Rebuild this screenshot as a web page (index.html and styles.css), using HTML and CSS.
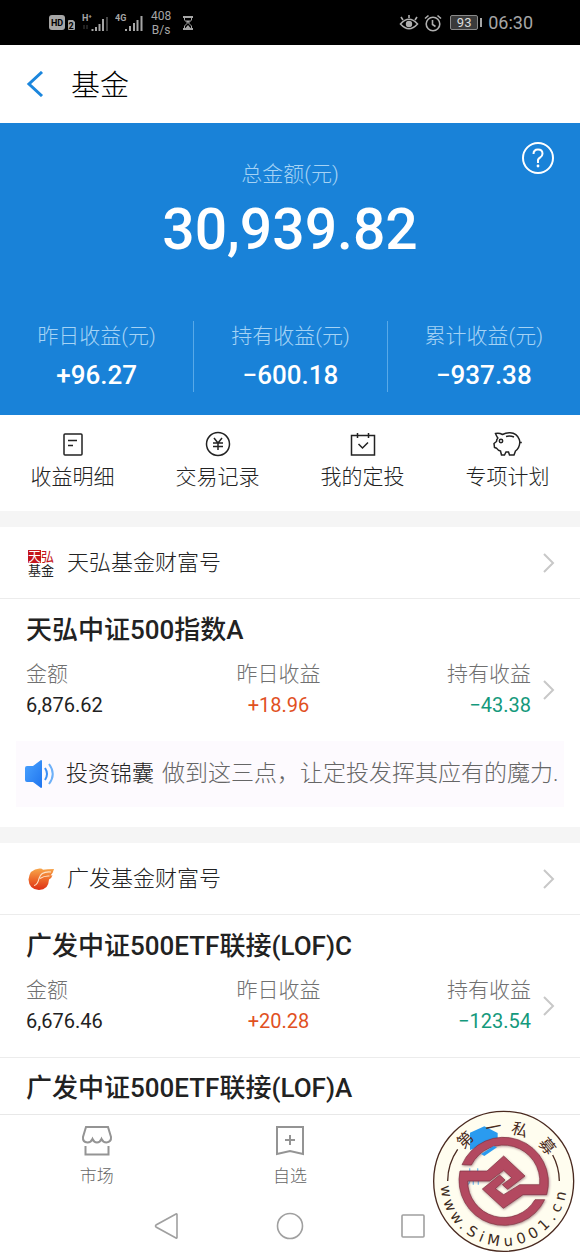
FILE: index.html
```html
<!DOCTYPE html>
<html lang="zh-CN">
<head>
<meta charset="utf-8">
<meta name="viewport" content="width=device-width, initial-scale=1">
<title>基金</title>
<link rel="stylesheet" href="styles.css">
</head>
<body>
<div class="app">
  <div class="status">
    <div class="status-side">
      <svg class="ic-hd" viewBox="0 0 27 18" width="27" height="18"><rect x="0" y="1" width="16" height="15" rx="3" fill="#a6a6a6"/><text x="8" y="12" text-anchor="middle" class="t-hd">HD</text><path d="M20 6h4l2 2v7q0 1-1 1h-5q-1 0-1-1V7q0-1 1-1z" fill="#a6a6a6"/><text x="22" y="15" text-anchor="middle" class="t-hd">2</text></svg>
      <svg viewBox="0 0 27 20" width="27" height="20"><text x="0" y="8" class="t-net">H⁺</text><path d="M2 12v4M5 12v4" stroke="#444" stroke-width="1"/><path d="M10.500 18v-2M14 18v-4M17.500 18v-7M21 18V6" stroke="#a6a6a6" stroke-width="2"/><path d="M25 18V4" stroke="#444" stroke-width="2"/></svg>
      <svg viewBox="0 0 28 20" width="28" height="20"><text x="0" y="8" class="t-net">4G</text><path d="M11 18v-2M15 18v-5M19 18v-8M22.500 18V7M26.500 18V3" stroke="#a6a6a6" stroke-width="2"/></svg>
      <div class="speed"><span>408</span><span>B/s</span></div>
      <svg class="ic-glass" viewBox="0 0 10 14" width="10" height="14" fill="none" stroke="#a6a6a6"><path d="M0 1h10M0 13h10" stroke-width="2"/><path d="M1.500 2v2L4.500 7l-3 3v2M8.500 2v2L5.500 7l3 3v2"/><path d="M2.500 4.500h5L5 7zM2.500 12L5 9l2.500 3z" fill="#a6a6a6" stroke="none"/></svg>
    </div>
    <div class="status-side status-right">
      <svg viewBox="0 0 20 18" width="20" height="18" fill="none" stroke="#b0b0b0" stroke-width="1.600"><path d="M1.500 10Q10 0.500 18.500 10Q10 19.500 1.500 10z"/><path d="M10 4V1M4 6L2 3M16 6l2-3"/><circle cx="10" cy="10" r="3.200" fill="#b0b0b0" stroke="none"/></svg>
      <svg viewBox="0 0 18 18" width="18" height="18" fill="none" stroke="#b0b0b0" stroke-width="1.600"><circle cx="9" cy="10" r="6.800"/><path d="M8.500 6v4.500l3 2M1 4.500L4.500 1.500M17 4.500L13.500 1.500"/></svg>
      <div class="battery"><span>93</span></div>
      <span class="clock">06:30</span>
    </div>
  </div>

  <header class="bar">
    <button class="back" aria-label="返回"><svg viewBox="0 0 18 26" width="18" height="26"><path d="M16 1L3 13l13 12" fill="none" stroke="#1b86dd" stroke-width="3"/></svg></button>
    <h1>基金</h1>
  </header>

  <section class="hero">
    <button class="help" aria-label="帮助"><svg viewBox="0 0 34 34" width="34" height="34" fill="none" stroke="#fff" stroke-width="2"><circle cx="17" cy="17" r="15"/><path d="M12.500 13Q12.500 8.500 17 8.500t4.500 4.200Q21.500 15 19 16.700T17 20V22"/><circle cx="17" cy="25" r="1.400" fill="#fff" stroke="none"/></svg></button>
    <div class="hero-label">总金额(元)</div>
    <div class="total">30,939.82</div>
    <div class="gains">
      <div class="gain"><span class="hero-label">昨日收益(元)</span><b>+96.27</b></div>
      <div class="gain"><span class="hero-label">持有收益(元)</span><b>−600.18</b></div>
      <div class="gain"><span class="hero-label">累计收益(元)</span><b>−937.38</b></div>
    </div>
  </section>

  <nav class="actions">
    <a href="#"><svg viewBox="0 0 28 26" width="28" height="26"><rect x="5" y="3" width="18" height="21" rx="1"/><path d="M9 9.500h9M9 14.500h5"/></svg>收益明细</a>
    <a href="#"><svg viewBox="0 0 28 26" width="28" height="26"><circle cx="14" cy="13" r="11.500"/><path d="M10 7l4 5 4-5M14 12v7M9 12h10M9 15.500h10"/></svg>交易记录</a>
    <a href="#"><svg viewBox="0 0 28 26" width="28" height="26"><rect x="2.500" y="4.500" width="23" height="19.500"/><path d="M8.500 2v5M19.500 2v5M9.500 13l4 4 5.500-5.500"/></svg>我的定投</a>
    <a href="#"><svg viewBox="0 0 30 26" width="30" height="26"><path d="M2.500 2.500Q6 1.500 9.500 3.500Q13 1.500 17 1.700Q24 2 26.300 8.500Q26.800 10 26.800 11.500Q26.500 17 22.500 20L21 24H16.500L15.500 21H13L11.500 24H8.500L7.500 20Q5 19.500 3.500 17.200L1.500 16.500L1 12.500L3.500 10.500Q3.500 8.500 4.800 7Q3.500 5 2.500 2.500zM26.800 11.500h2"/><circle cx="8" cy="10" r="1.700"/><path d="M13 5.500q4-1 8 .5"/></svg>专项计划</a>
  </nav>

  <section class="card">
    <a class="brand" href="#">
      <svg class="logo" viewBox="0 0 28 28" width="28" height="28"><rect x="1" y="1" width="13" height="13" fill="#c4151c"/><text class="t-logo" x="1" y="12"><tspan fill="#fff">天</tspan><tspan fill="#c4151c">弘</tspan></text><text class="t-logo" x="1" y="26">基金</text></svg>
      <span>天弘基金财富号</span>
      <svg class="chev" viewBox="0 0 12 20" width="12" height="20"><path d="M1 1l9 9-9 9"/></svg>
    </a>
    <article class="fund">
      <h2>天弘中证500指数A</h2>
      <div class="stats">
        <div><span>金额</span><b>6,876.62</b></div>
        <div><span>昨日收益</span><b class="up">+18.96</b></div>
        <div><span>持有收益</span><b class="down">−43.38</b></div>
        <svg class="chev" viewBox="0 0 12 20" width="12" height="20"><path d="M1 1l9 9-9 9"/></svg>
      </div>
    </article>
    <a class="tip" href="#">
      <svg viewBox="0 0 30 30" width="30" height="30"><defs><linearGradient id="spk" x2="1" y2="1"><stop stop-color="#4aa3ff"/><stop offset="1" stop-color="#1f74ee"/></linearGradient></defs><path d="M2 7h6l8-6q1 0 1 1v26q0 1-1 1l-8-6H2q-2 0-2-2V9q0-2 2-2z" fill="url(#spk)"/><path d="M20 9q4 6 0 12" fill="none" stroke="#3b8ff5" stroke-width="2"/><path d="M24 5q7.500 10 0 20" fill="none" stroke="#6db0f8" stroke-width="2"/></svg>
      <strong>投资锦囊</strong><span>做到这三点，让定投发挥其应有的魔力.</span>
    </a>
  </section>

  <section class="card">
    <a class="brand" href="#">
      <svg viewBox="0 0 28 28" width="28" height="28"><defs><linearGradient id="gf" x2="0" y2="1"><stop stop-color="#f7a64a"/><stop offset=".5" stop-color="#ee6a2a"/><stop offset="1" stop-color="#dd2f16"/></linearGradient></defs><path d="M27 4Q26 8.500 23.500 10.500l2-.3Q24.500 13.500 22 14.500Q21.500 25 12 25Q2 24.500 1.500 14.500Q2.500 4 12.500 3.500Q15 3.300 16 4.800Q20 4 27 4z" fill="url(#gf)"/><path d="M24 7Q14 6 12 13.500Q10.500 20 7 20.500M22.500 11q-5-.5-9.500 2.500" fill="none" stroke="#fde3c8" stroke-width="1.100"/></svg>
      <span>广发基金财富号</span>
      <svg class="chev" viewBox="0 0 12 20" width="12" height="20"><path d="M1 1l9 9-9 9"/></svg>
    </a>
    <article class="fund">
      <h2>广发中证500ETF联接(LOF)C</h2>
      <div class="stats">
        <div><span>金额</span><b>6,676.46</b></div>
        <div><span>昨日收益</span><b class="up">+20.28</b></div>
        <div><span>持有收益</span><b class="down">−123.54</b></div>
        <svg class="chev" viewBox="0 0 12 20" width="12" height="20"><path d="M1 1l9 9-9 9"/></svg>
      </div>
    </article>
    <article class="fund next">
      <h2>广发中证500ETF联接(LOF)A</h2>
    </article>
  </section>

  <div class="foot">
    <nav class="tabs">
      <a href="#"><svg viewBox="0 0 32 32" width="32" height="32"><path d="M5 2h22l3 10q.500 5-4.500 5.500Q22 17.500 20.500 14Q19 17.500 16 17.500T11.500 14Q10 17.500 6.500 17.500Q1.500 17 2 12zM4.500 21v8.500h23V21"/></svg>市场</a>
      <a href="#"><svg viewBox="0 0 32 32" width="32" height="32"><path d="M3 2h26v27l-13-3-13 3zM16 10v10M11 15h10"/></svg>自选</a>
      <a href="#" aria-label="持有"></a>
    </nav>
    <div class="sys">
      <button aria-label="后退"><svg viewBox="0 0 28 28" width="28" height="28"><path d="M24 2.500v23q0 1-1 .500L3 15q-1-1 0-2L23 2q1-.500 1 .500z"/></svg></button>
      <button aria-label="主屏"><svg viewBox="0 0 28 28" width="28" height="28"><circle cx="14" cy="14" r="12.500"/></svg></button>
      <button aria-label="最近任务"><svg viewBox="0 0 28 28" width="28" height="28"><rect x="3" y="3" width="22" height="22" rx="1"/></svg></button>
    </div>
    <svg class="seal" viewBox="0 0 465 471" width="155" height="157">
      <defs>
        <path id="rim" d="M47 258A189 189 0 0 0 425 240L424 200"/>
        <filter id="sh" x="-10%" y="-10%" width="120%" height="120%"><feDropShadow dx="2" dy="3" stdDeviation="3" flood-color="#5b2430" flood-opacity=".5"/></filter>
      </defs>
      <circle cx="236" cy="244" r="210" fill="#fffdef" stroke="#4a2a20" stroke-width="4"/>
      <path d="M68 243A168 168 0 0 1 98 148M403 243A168 168 0 0 0 383 165" fill="none" stroke="#4a2a20" stroke-width="4"/>
      <path d="M135 98L178 79L218 99V120L135 150Z" fill="#2a9bf0"/>
      <path d="M134 205v10M158 205v10M134 242q0 10-8 12M145 242v12M160 242v12" stroke="#7cc4f2" stroke-width="4" fill="none"/>
      <g fill="#b34a60" stroke="#7d2f40" stroke-width="2" filter="url(#sh)">
        <path d="M111 194A135 135 0 0 1 365 284L294 284L235 325L172 267L224 225L240 240L211 266L236 284L284 254L344 254A108.500 108.500 0 0 0 139 195Z"/>
        <path d="M105 213L186 213L236 168L300 228L248 268L232 254L260 233L236 211L194 243L128 243A108.500 108.500 0 0 0 330 299L359 299A135 135 0 0 1 105 213Z"/>
      </g>
      <path d="M168 162L206 138L216 142L178 168Z" fill="#2a9bf0"/>
      <g class="t-seal">
        <text transform="translate(120 119) rotate(-43)" y="18">第</text>
        <text transform="translate(205 81) rotate(-11)" y="18">一</text>
        <text transform="translate(285 88) rotate(17)" y="18">私</text>
        <text transform="translate(367 138) rotate(51)" y="18">募</text>
      </g>
      <text class="t-url" dx="0 11 11 11 14 16 15 15 15 15 15 15 15 15"><textPath href="#rim">www.SiMu001.cn</textPath></text>
    </svg>
  </div>
</div>
</body>
</html>
```
FILE: styles.css
```css
* { box-sizing: border-box; }
body {
  margin: 0;
  background: #fff;
  color: #222;
  font-family: Roboto, "Noto Sans CJK SC", sans-serif;
  font-weight: 300;
}
a { color: inherit; text-decoration: none; }
button { padding: 0; border: 0; background: none; display: flex; }
h1, h2 { margin: 0; }
b, strong { font-weight: 500; }
svg { display: block; flex: none; }
.app { display: flex; flex-direction: column; min-height: 100vh; }

.status {
  display: flex;
  justify-content: space-between;
  align-items: center;
  height: 45px;
  padding: 0 47px 0 49px;
  background: #000;
  color: #a6a6a6;
}
.status-side { display: flex; align-items: center; gap: 6px; }
.status-right { gap: 5px; }
.speed {
  display: flex;
  flex-direction: column;
  align-items: center;
  margin-left: 2px;
  font-size: 12px;
  line-height: 14px;
  font-weight: 400;
}
.ic-glass { margin-left: 6px; }
.t-hd { font: 700 9px Roboto, sans-serif; }
.t-net { font: 700 9px Roboto, sans-serif; fill: #a6a6a6; }
.battery {
  position: relative;
  width: 28px;
  height: 15px;
  margin: 0 5px 0 3px;
  border: 1px solid #8a8a8a;
  border-radius: 2px;
  background: #3a3a3a;
  color: #ddd;
  font-size: 13px;
  line-height: 13px;
  font-weight: 400;
  text-align: center;
}
.battery::after {
  content: "";
  position: absolute;
  right: -5px;
  top: 2px;
  width: 2px;
  height: 9px;
  background: #a6a6a6;
}
.clock { font-size: 18px; font-weight: 400; }

.bar { display: flex; align-items: center; gap: 27px; height: 78px; padding: 0 26px; }
.bar h1 { padding-top: 4px; font-size: 29px; line-height: 40px; font-weight: 300; color: #000; }

.hero { position: relative; padding: 36px 0 23px; background: #1982d8; color: #fff; text-align: center; }
.help { position: absolute; right: 25px; top: 18px; }
.hero-label { font-size: 21px; line-height: 30px; color: #a5d3f5; }
.total { font-size: 57px; line-height: 72px; font-weight: 500; margin-top: 5px; }
.gains { display: grid; grid-template-columns: repeat(3, 1fr); margin-top: 55px; }
.gain { display: flex; flex-direction: column; height: 71px; }
.gain + .gain { border-left: 1px solid #58a9e8; }
.gain b { font-size: 26px; line-height: 32px; margin-top: 8px; }

.actions { display: grid; grid-template-columns: repeat(4, 1fr); padding: 16px 0 18px; }
.actions a {
  display: flex;
  flex-direction: column;
  align-items: center;
  gap: 5px;
  font-size: 21px;
  line-height: 31px;
}
.actions svg { fill: none; stroke: #222; stroke-width: 1.5; }

.card { border-top: 16px solid #f5f5f5; }
.brand {
  display: flex;
  align-items: center;
  gap: 12px;
  height: 72px;
  padding: 0 25px 0 27px;
  border-bottom: 1px solid #ececec;
  font-size: 22px;
  line-height: 30px;
}
.brand span { flex: 1; }
.logo { overflow: visible; }
.t-logo { font: 400 13px "Noto Sans CJK SC", sans-serif; fill: #222; }
.chev { fill: none; stroke: #c8c8c8; stroke-width: 2; }

.fund { padding: 13px 25px 21px 26px; }
.fund h2 { font-size: 26px; line-height: 36px; font-weight: 500; }
.stats { display: flex; align-items: center; margin-top: 11px; }
.stats div { display: flex; flex-direction: column; flex: 1; }
.stats div:nth-child(2) { align-items: center; }
.stats div:nth-child(3) { align-items: flex-end; }
.stats span { font-size: 21px; line-height: 31px; color: #707070; }
.stats b { font-size: 20px; line-height: 30px; font-weight: 400; }
.stats .chev { margin-left: 12px; }
.stats .up { color: #e1511f; }
.stats .down { color: #14997c; }
.next { border-top: 1px solid #ececec; padding: 12px 25px 7px 26px; }

.tip {
  display: flex;
  align-items: center;
  height: 66px;
  margin: 0 16px 20px;
  padding-left: 9px;
  background: #fdfafe;
  font-size: 22px;
  line-height: 30px;
  white-space: nowrap;
}
.tip strong { margin: 0 8px 0 11px; font-weight: 300; }
.tip span { color: #666; font-size: 23px; }

.foot { position: relative; margin-top: auto; border-top: 1px solid #e8e8e8; background: #fff; }
.tabs { display: grid; grid-template-columns: repeat(3, 1fr); padding: 10px 0 0; }
.tabs a {
  display: flex;
  flex-direction: column;
  align-items: center;
  gap: 6px;
  color: #666;
  font-size: 17px;
  line-height: 26px;
}
.tabs svg { fill: none; stroke: #949494; stroke-width: 2; }
.sys { display: flex; justify-content: center; gap: 95px; padding: 23px 0 17px; }
.sys svg { fill: none; stroke: #a0a0a0; stroke-width: 1.6; }
.seal { position: absolute; right: 0; bottom: 0; }
.t-seal { font: 400 48px "Noto Sans CJK SC", sans-serif; fill: #4a2a20; text-anchor: middle; }
.t-url { font: 400 44px "DejaVu Sans", sans-serif; fill: #3c2a20; }
```
